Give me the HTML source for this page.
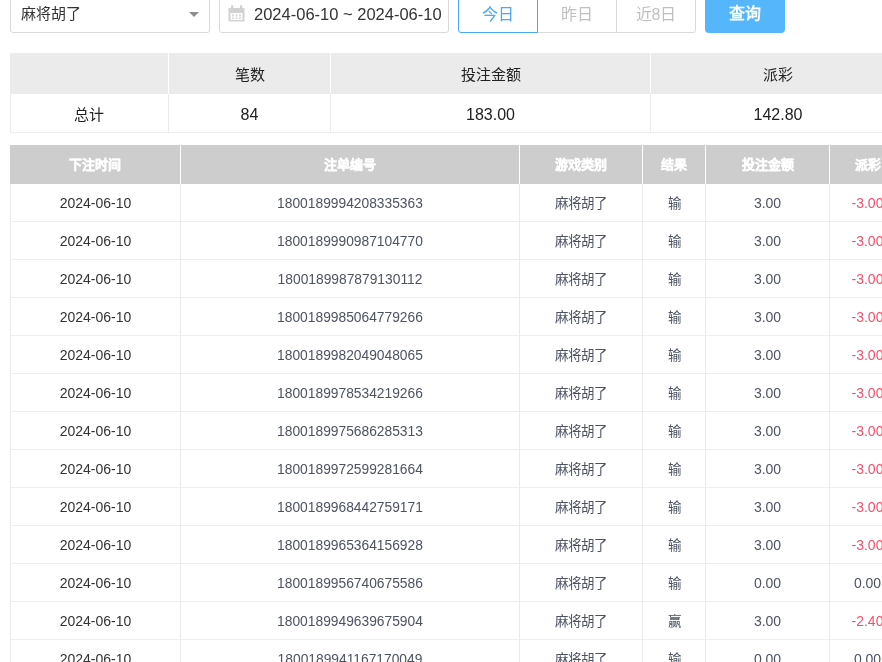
<!DOCTYPE html>
<html lang="zh-CN">
<head>
<meta charset="utf-8">
<style>
*{box-sizing:border-box;margin:0;padding:0}
html,body{width:882px;height:662px;overflow:hidden;background:#fff}
body{font-family:"Liberation Sans",sans-serif;font-size:14px;color:#333;position:relative}
#wrap{position:absolute;left:0;top:0;width:882px;height:662px;overflow:hidden;will-change:transform}
.abs{position:absolute}
.sel{left:10px;top:-8px;width:200px;height:41px;border:1px solid #d9d9d9;border-radius:3px}
.sel .t{position:absolute;left:10px;top:10.5px;font-size:15px;color:#333;line-height:20px;white-space:nowrap}
.sel .caret{position:absolute;left:178px;top:19px;width:0;height:0;border-left:5px solid transparent;border-right:5px solid transparent;border-top:5px solid #8c8c8c}
.date{left:219px;top:-8px;width:230px;height:41px;border:1px solid #d9d9d9;border-radius:3px}
.date .t{position:absolute;left:34px;top:11px;font-size:16.5px;color:#333;line-height:20px;white-space:nowrap}
.bt{position:absolute;top:-8px;height:41px;text-align:center;font-size:16px;color:#c0c0c0;line-height:43px;border:1px solid #d9d9d9}
.q{left:705px;top:-8px;width:80px;height:41px;background:#55b6fb;border-radius:4px;color:#fff;font-size:16px;text-align:center;line-height:43px;font-weight:bold}
.sh{position:absolute;left:10px;top:53px;width:900px;height:41px;background:#ebebeb}
.sd{position:absolute;left:10px;top:94px;width:900px;height:39px;border-bottom:1px solid #eeeeee}
.sh .c,.sd .c{position:absolute;top:0;height:100%;text-align:center;font-size:15px;color:#222}
.sh .c{line-height:43px}
.sd .c{line-height:41px;font-size:16px}
.sd .c:first-child{font-size:15px}
.mh{position:absolute;left:0;top:145px;width:910px;height:39px}
.mh .c{position:absolute;top:0;height:39px;background:#cdcdcd;color:#fff;font-weight:bold;font-size:13px;-webkit-text-stroke:0.35px #fff;line-height:39px;text-align:center}
.mh .c:first-child{left:10px!important;width:170px!important}
.mr{position:absolute;left:0;width:910px;height:38px}
.mr::after{content:"";position:absolute;left:10px;right:0;bottom:0;height:1px;background:#eeeeee}
.mr .c{position:absolute;top:1px;height:37px;line-height:37px;text-align:center;font-size:14px;color:#333;white-space:nowrap}
.mr .n,.mr .g,.mr .s,.mr .a,.mr .p{color:#4c5362}
.mr .g,.mr .s{font-size:13.5px}
.mr .n{font-size:13.8px}
.mr .r{color:#f5506a}
.vl{position:absolute;width:1px;background:#ebebeb}
.vh{position:absolute;width:1px;background:#fff}

</style>
</head>
<body>
<div id="wrap">
<div class="abs sel"><span class="t">麻将胡了</span><span class="caret"></span></div>
<div class="abs date"><svg class="abs" style="left:8px;top:12px" width="18" height="18" viewBox="0 0 18 18"><path fill="#d2d2d2" fill-rule="evenodd" d="M0.5 3h16v13.5h-16z M2.5 8h12v7h-12z"/><rect x="3" y="0" width="2.2" height="5" rx="1" fill="#d2d2d2"/><rect x="12" y="0" width="2.2" height="5" rx="1" fill="#d2d2d2"/><g fill="#dadada"><rect x="4" y="9.3" width="2" height="2"/><rect x="7.5" y="9.3" width="2" height="2"/><rect x="11" y="9.3" width="2" height="2"/><rect x="4" y="12.3" width="2" height="1.7"/><rect x="7.5" y="12.3" width="2" height="1.7"/><rect x="11" y="12.3" width="2" height="1.7"/></g></svg><span class="t">2024-06-10 ~ 2024-06-10</span></div>
<div class="bt" style="left:458px;width:80px;border-color:#4aa8f8;color:#4aa8f8;border-radius:0 0 0 3px;z-index:2">今日</div>
<div class="bt" style="left:537px;width:80px;border-left-color:#d9d9d9">昨日</div>
<div class="bt" style="left:616px;width:80px;border-radius:0 0 3px 0">近8日</div>
<div class="abs q">查询</div>
<div class="sh">
<div class="c" style="left:0;width:158px"></div>
<div class="c" style="left:159px;width:161px">笔数</div>
<div class="c" style="left:321px;width:319px">投注金额</div>
<div class="c" style="left:641px;width:254px">派彩</div>
</div>
<div class="sd">
<div class="c" style="left:0;width:158px">总计</div>
<div class="c" style="left:159px;width:161px">84</div>
<div class="c" style="left:321px;width:319px">183.00</div>
<div class="c" style="left:641px;width:254px">142.80</div>
</div>
<div class="vl" style="left:10px;top:94px;height:39px"></div>
<div class="vh" style="left:168px;top:53px;height:41px"></div>
<div class="vl" style="left:168px;top:94px;height:39px"></div>
<div class="vh" style="left:330px;top:53px;height:41px"></div>
<div class="vl" style="left:330px;top:94px;height:39px"></div>
<div class="vh" style="left:650px;top:53px;height:41px"></div>
<div class="vl" style="left:650px;top:94px;height:39px"></div>

<div class="mh">
<div class="c" style="left:11px;width:169px">下注时间</div>
<div class="c" style="left:181px;width:338px">注单编号</div>
<div class="c" style="left:520px;width:122px">游戏类别</div>
<div class="c" style="left:643px;width:62px">结果</div>
<div class="c" style="left:706px;width:123px">投注金额</div>
<div class="c" style="left:830px;width:75px">派彩</div>
</div>
<div class="mr" style="top:184px">
<div class="c d" style="left:11px;width:169px">2024-06-10</div>
<div class="c n" style="left:181px;width:338px">1800189994208335363</div>
<div class="c g" style="left:520px;width:122px">麻将胡了</div>
<div class="c s" style="left:643px;width:62px">输</div>
<div class="c a" style="left:706px;width:123px">3.00</div>
<div class="c p r" style="left:830px;width:75px">-3.00</div>
</div>
<div class="mr" style="top:222px">
<div class="c d" style="left:11px;width:169px">2024-06-10</div>
<div class="c n" style="left:181px;width:338px">1800189990987104770</div>
<div class="c g" style="left:520px;width:122px">麻将胡了</div>
<div class="c s" style="left:643px;width:62px">输</div>
<div class="c a" style="left:706px;width:123px">3.00</div>
<div class="c p r" style="left:830px;width:75px">-3.00</div>
</div>
<div class="mr" style="top:260px">
<div class="c d" style="left:11px;width:169px">2024-06-10</div>
<div class="c n" style="left:181px;width:338px">1800189987879130112</div>
<div class="c g" style="left:520px;width:122px">麻将胡了</div>
<div class="c s" style="left:643px;width:62px">输</div>
<div class="c a" style="left:706px;width:123px">3.00</div>
<div class="c p r" style="left:830px;width:75px">-3.00</div>
</div>
<div class="mr" style="top:298px">
<div class="c d" style="left:11px;width:169px">2024-06-10</div>
<div class="c n" style="left:181px;width:338px">1800189985064779266</div>
<div class="c g" style="left:520px;width:122px">麻将胡了</div>
<div class="c s" style="left:643px;width:62px">输</div>
<div class="c a" style="left:706px;width:123px">3.00</div>
<div class="c p r" style="left:830px;width:75px">-3.00</div>
</div>
<div class="mr" style="top:336px">
<div class="c d" style="left:11px;width:169px">2024-06-10</div>
<div class="c n" style="left:181px;width:338px">1800189982049048065</div>
<div class="c g" style="left:520px;width:122px">麻将胡了</div>
<div class="c s" style="left:643px;width:62px">输</div>
<div class="c a" style="left:706px;width:123px">3.00</div>
<div class="c p r" style="left:830px;width:75px">-3.00</div>
</div>
<div class="mr" style="top:374px">
<div class="c d" style="left:11px;width:169px">2024-06-10</div>
<div class="c n" style="left:181px;width:338px">1800189978534219266</div>
<div class="c g" style="left:520px;width:122px">麻将胡了</div>
<div class="c s" style="left:643px;width:62px">输</div>
<div class="c a" style="left:706px;width:123px">3.00</div>
<div class="c p r" style="left:830px;width:75px">-3.00</div>
</div>
<div class="mr" style="top:412px">
<div class="c d" style="left:11px;width:169px">2024-06-10</div>
<div class="c n" style="left:181px;width:338px">1800189975686285313</div>
<div class="c g" style="left:520px;width:122px">麻将胡了</div>
<div class="c s" style="left:643px;width:62px">输</div>
<div class="c a" style="left:706px;width:123px">3.00</div>
<div class="c p r" style="left:830px;width:75px">-3.00</div>
</div>
<div class="mr" style="top:450px">
<div class="c d" style="left:11px;width:169px">2024-06-10</div>
<div class="c n" style="left:181px;width:338px">1800189972599281664</div>
<div class="c g" style="left:520px;width:122px">麻将胡了</div>
<div class="c s" style="left:643px;width:62px">输</div>
<div class="c a" style="left:706px;width:123px">3.00</div>
<div class="c p r" style="left:830px;width:75px">-3.00</div>
</div>
<div class="mr" style="top:488px">
<div class="c d" style="left:11px;width:169px">2024-06-10</div>
<div class="c n" style="left:181px;width:338px">1800189968442759171</div>
<div class="c g" style="left:520px;width:122px">麻将胡了</div>
<div class="c s" style="left:643px;width:62px">输</div>
<div class="c a" style="left:706px;width:123px">3.00</div>
<div class="c p r" style="left:830px;width:75px">-3.00</div>
</div>
<div class="mr" style="top:526px">
<div class="c d" style="left:11px;width:169px">2024-06-10</div>
<div class="c n" style="left:181px;width:338px">1800189965364156928</div>
<div class="c g" style="left:520px;width:122px">麻将胡了</div>
<div class="c s" style="left:643px;width:62px">输</div>
<div class="c a" style="left:706px;width:123px">3.00</div>
<div class="c p r" style="left:830px;width:75px">-3.00</div>
</div>
<div class="mr" style="top:564px">
<div class="c d" style="left:11px;width:169px">2024-06-10</div>
<div class="c n" style="left:181px;width:338px">1800189956740675586</div>
<div class="c g" style="left:520px;width:122px">麻将胡了</div>
<div class="c s" style="left:643px;width:62px">输</div>
<div class="c a" style="left:706px;width:123px">0.00</div>
<div class="c p" style="left:830px;width:75px">0.00</div>
</div>
<div class="mr" style="top:602px">
<div class="c d" style="left:11px;width:169px">2024-06-10</div>
<div class="c n" style="left:181px;width:338px">1800189949639675904</div>
<div class="c g" style="left:520px;width:122px">麻将胡了</div>
<div class="c s" style="left:643px;width:62px">赢</div>
<div class="c a" style="left:706px;width:123px">3.00</div>
<div class="c p r" style="left:830px;width:75px">-2.40</div>
</div>
<div class="mr" style="top:640px">
<div class="c d" style="left:11px;width:169px">2024-06-10</div>
<div class="c n" style="left:181px;width:338px">1800189941167170049</div>
<div class="c g" style="left:520px;width:122px">麻将胡了</div>
<div class="c s" style="left:643px;width:62px">输</div>
<div class="c a" style="left:706px;width:123px">0.00</div>
<div class="c p" style="left:830px;width:75px">0.00</div>
</div>
<div class="vl" style="left:10px;top:184px;height:500px"></div>
<div class="vh" style="left:180px;top:145px;height:39px"></div>
<div class="vl" style="left:180px;top:184px;height:500px"></div>
<div class="vh" style="left:519px;top:145px;height:39px"></div>
<div class="vl" style="left:519px;top:184px;height:500px"></div>
<div class="vh" style="left:642px;top:145px;height:39px"></div>
<div class="vl" style="left:642px;top:184px;height:500px"></div>
<div class="vh" style="left:705px;top:145px;height:39px"></div>
<div class="vl" style="left:705px;top:184px;height:500px"></div>
<div class="vh" style="left:829px;top:145px;height:39px"></div>
<div class="vl" style="left:829px;top:184px;height:500px"></div>
</div>
</body>
</html>
